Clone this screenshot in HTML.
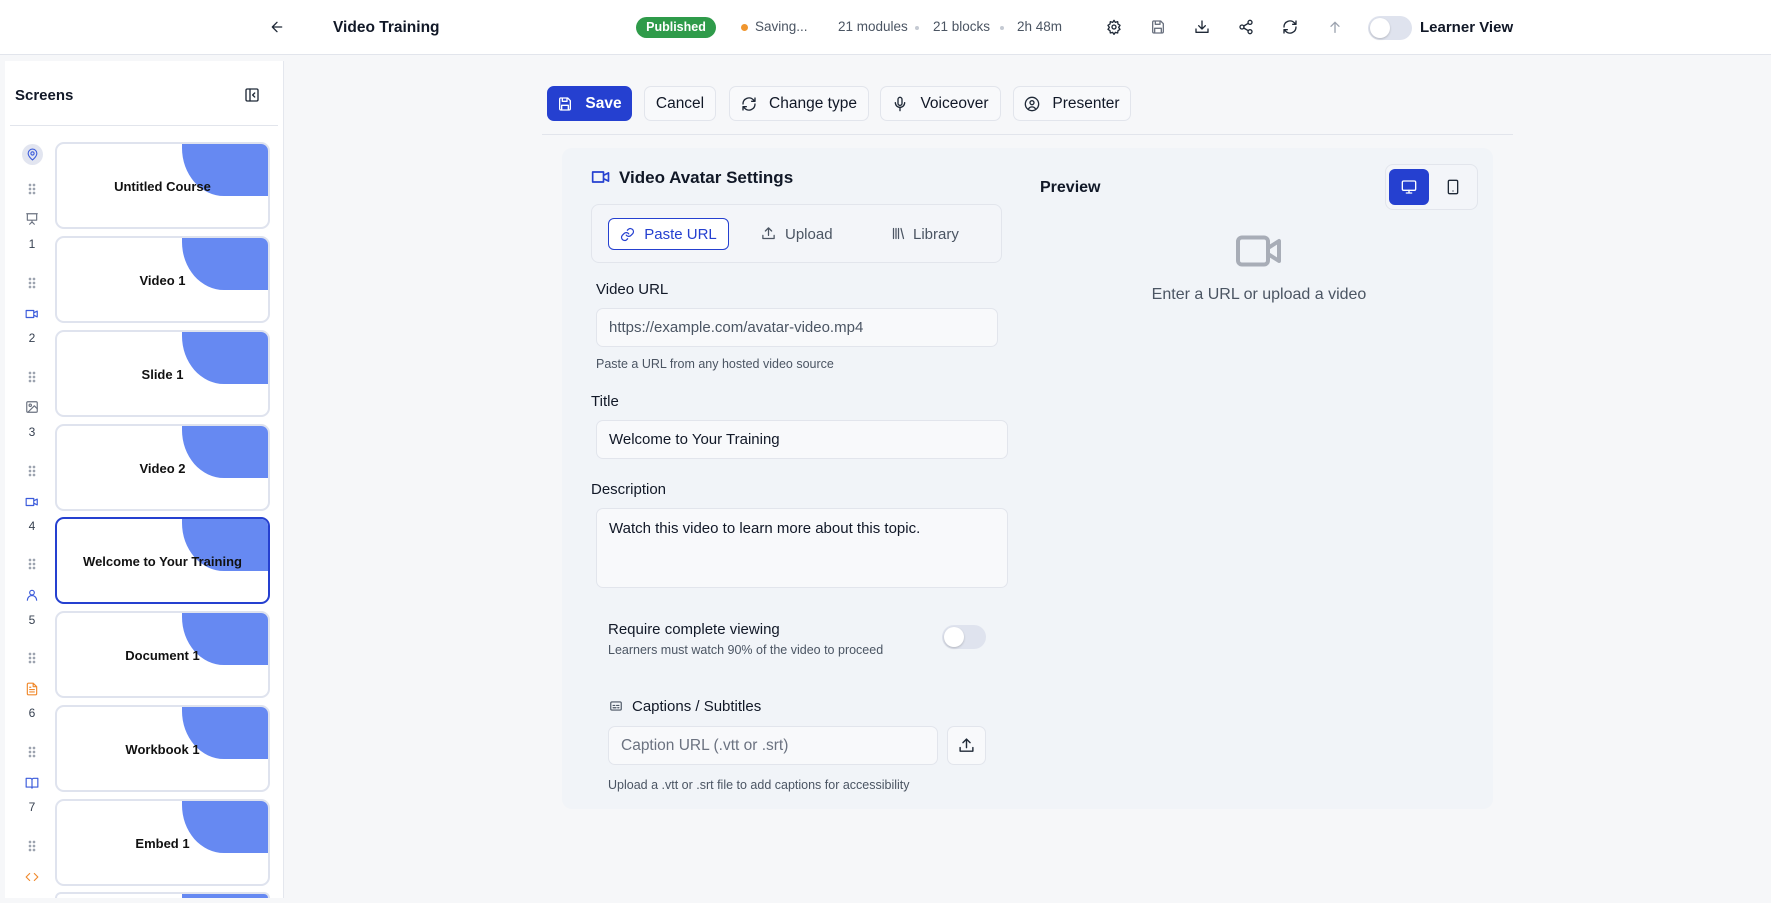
<!DOCTYPE html>
<html style="width:1771px;height:903px;overflow:hidden"><head><meta charset="utf-8"><style>
*{box-sizing:border-box;margin:0;padding:0}
body{width:1771px;height:903px;overflow:hidden;background:#f6f7f9;font-family:"Liberation Sans",Arial,sans-serif;color:#111827;position:relative}
.a{position:absolute}
svg{display:block}
.hdr{left:0;top:0;width:1771px;height:55px;background:#fff;border-bottom:1px solid #e2e5ec}
.meta{font-size:13.5px;color:#4b5563;top:19px}
.ic{stroke:#1f2937;fill:none;stroke-width:2;stroke-linecap:round;stroke-linejoin:round}
.btn{top:86px;height:35px;border:1px solid #e2e5ec;border-radius:7px;background:#f8f9fb;font-size:15.5px;font-weight:500;display:flex;align-items:center;justify-content:center;gap:12px;color:#111827}
.card{left:55px;width:215px;height:87px;background:#fff;border:2px solid #dfe3ee;border-radius:9px;overflow:hidden}
.card .blue{position:absolute;right:0;top:0;width:86px;height:52px;background:#6689f2;border-bottom-left-radius:42px 48px}
.card .t{position:absolute;left:0;right:0;top:35px;text-align:center;font-size:13px;font-weight:700;color:#111}
.num{left:22px;width:20px;text-align:center;font-size:12px;color:#374151}
.dots{left:28px;width:8px;height:12px;background-image:radial-gradient(circle,#9ca3af 1.2px,transparent 1.5px);background-size:4px 4px}
.lbl{font-size:15px;font-weight:500;color:#111827}
.inp{background:#f8f9fb;border:1px solid #e2e5ec;border-radius:7px;font-size:15px;padding-left:12px;display:flex;align-items:center}
.help{font-size:12.5px;color:#4b5563}
</style></head><body>
<div class="a hdr"></div>
<svg class="a" style="left:269px;top:19px" width="16" height="16" viewBox="0 0 24 24"><path class="ic" d="M19 12H5M12 19l-7-7 7-7"/></svg>
<div class="a" style="left:333px;top:19px;font-size:15.5px;font-weight:700">Video Training</div>
<div class="a" style="left:636px;top:17px;width:80px;height:21px;border-radius:11px;background:#2f9b4a;color:#fff;font-size:12.5px;font-weight:700;text-align:center;line-height:21px">Published</div>
<div class="a" style="left:741px;top:24px;width:7px;height:7px;border-radius:50%;background:#f0962e"></div>
<div class="a meta" style="left:755px">Saving...</div>
<div class="a meta" style="left:838px">21 modules</div>
<div class="a" style="left:915px;top:26px;width:4px;height:4px;border-radius:50%;background:#c5cad3"></div>
<div class="a meta" style="left:933px">21 blocks</div>
<div class="a" style="left:1000px;top:26px;width:4px;height:4px;border-radius:50%;background:#c5cad3"></div>
<div class="a meta" style="left:1017px">2h 48m</div>
<svg class="a" style="left:1106px;top:19px" width="16" height="16" viewBox="0 0 24 24"><circle class="ic" cx="12" cy="12" r="3"/><path class="ic" d="M12 2l2 3 3.5-1 .5 3.5 3 2-2 3 2 3-3 2-.5 3.5-3.5-1-2 3-2-3-3.5 1-.5-3.5-3-2 2-3-2-3 3-2 .5-3.5 3.5 1z"/></svg>
<svg class="a" style="left:1150px;top:19px" width="16" height="16" viewBox="0 0 24 24"><path class="ic" style="stroke:#6b7280" d="M5 3h11l4 4v12a2 2 0 0 1-2 2H6a2 2 0 0 1-2-2V5a2 2 0 0 1 1-2zM8 3v5h7V3M7 21v-7h10v7"/></svg>
<svg class="a" style="left:1194px;top:19px" width="16" height="16" viewBox="0 0 24 24"><path class="ic" d="M12 3v12M7 10l5 5 5-5M3 15v5h18v-5"/></svg>
<svg class="a" style="left:1238px;top:19px" width="16" height="16" viewBox="0 0 24 24"><circle class="ic" cx="18" cy="5" r="3"/><circle class="ic" cx="6" cy="12" r="3"/><circle class="ic" cx="18" cy="19" r="3"/><path class="ic" d="M8.6 13.5l6.8 4M15.4 6.5l-6.8 4"/></svg>
<svg class="a" style="left:1282px;top:19px" width="16" height="16" viewBox="0 0 24 24"><path class="ic" d="M21 12a9 9 0 0 1-15.5 6.3L3 16M3 12a9 9 0 0 1 15.5-6.3L21 8M21 3v5h-5M3 21v-5h5"/></svg>
<svg class="a" style="left:1327px;top:19px" width="16" height="16" viewBox="0 0 24 24"><path class="ic" style="stroke:#9ca3af" d="M12 20V5M6 11l6-6 6 6"/></svg>
<div class="a" style="left:1368px;top:16px;width:44px;height:24px;border-radius:12px;background:#dfe3ee"></div>
<div class="a" style="left:1370px;top:18px;width:20px;height:20px;border-radius:50%;background:#fff;box-shadow:0 1px 2px rgba(0,0,0,.2)"></div>
<div class="a" style="left:1420px;top:19px;font-size:15px;font-weight:700">Learner View</div>

<!-- sidebar -->
<div class="a" style="left:5px;top:61px;width:279px;height:837px;background:#fff;border-right:1px solid #e4e7ee"></div>
<div class="a" style="left:15px;top:87px;font-size:15px;font-weight:700">Screens</div>
<svg class="a" style="left:244px;top:87px" width="16" height="16" viewBox="0 0 24 24"><rect class="ic" x="3" y="3" width="18" height="18" rx="2"/><path class="ic" d="M9 3v18M16 9l-3 3 3 3"/></svg>
<div class="a" style="left:10px;top:125px;width:268px;height:1px;background:#e2e5ec"></div>

<div class="a" style="left:22px;top:144px;width:21px;height:21px;border-radius:50%;background:#e2e5f0"></div>
<svg class="a" style="left:26px;top:148px" width="13" height="13" viewBox="0 0 24 24"><path class="ic" style="stroke:#3b5bdb" d="M20 10c0 6-8 12-8 12s-8-6-8-12a8 8 0 0 1 16 0z"/><circle class="ic" style="stroke:#3b5bdb" cx="12" cy="10" r="3"/></svg>

<div class="a card" style="top:142px"><div class="blue"></div><div class="t">Untitled Course</div></div>
<div class="a card" style="top:236px"><div class="blue"></div><div class="t">Video 1</div></div>
<div class="a card" style="top:330px"><div class="blue"></div><div class="t">Slide 1</div></div>
<div class="a card" style="top:424px"><div class="blue"></div><div class="t">Video 2</div></div>
<div class="a card" style="top:517px;border-color:#2540d0"><div class="blue"></div><div class="t">Welcome to Your Training</div></div>
<div class="a card" style="top:611px"><div class="blue"></div><div class="t">Document 1</div></div>
<div class="a card" style="top:705px"><div class="blue"></div><div class="t">Workbook 1</div></div>
<div class="a card" style="top:799px"><div class="blue"></div><div class="t">Embed 1</div></div>
<div class="a card" style="top:892px;height:6px;border-bottom:none;border-radius:9px 9px 0 0"><div class="blue"></div></div>

<div class="a dots" style="top:183px"></div>
<div class="a dots" style="top:277px"></div>
<div class="a dots" style="top:371px"></div>
<div class="a dots" style="top:465px"></div>
<div class="a dots" style="top:558px"></div>
<div class="a dots" style="top:652px"></div>
<div class="a dots" style="top:746px"></div>
<div class="a dots" style="top:840px"></div>
<div class="a num" style="top:237px">1</div>
<div class="a num" style="top:331px">2</div>
<div class="a num" style="top:425px">3</div>
<div class="a num" style="top:519px">4</div>
<div class="a num" style="top:613px">5</div>
<div class="a num" style="top:706px">6</div>
<div class="a num" style="top:800px">7</div>
<svg class="a" style="left:25px;top:212px" width="14" height="14" viewBox="0 0 24 24"><path class="ic" style="stroke:#6b7280" d="M3 3h18M4 3v11h16V3M12 14v3M8 21l4-4 4 4"/></svg>
<svg class="a" style="left:25px;top:307px" width="14" height="14" viewBox="0 0 24 24"><path class="ic" style="stroke:#3b5bdb" d="M2 6h13v12H2zM15 10l6-3v10l-6-3"/></svg>
<svg class="a" style="left:25px;top:400px" width="14" height="14" viewBox="0 0 24 24"><rect class="ic" style="stroke:#6b7280" x="3" y="3" width="18" height="18" rx="2"/><circle class="ic" style="stroke:#6b7280" cx="9" cy="9" r="2"/><path class="ic" style="stroke:#6b7280" d="M21 15l-5-5L5 21"/></svg>
<svg class="a" style="left:25px;top:495px" width="14" height="14" viewBox="0 0 24 24"><path class="ic" style="stroke:#3b5bdb" d="M2 6h13v12H2zM15 10l6-3v10l-6-3"/></svg>
<svg class="a" style="left:25px;top:588px" width="14" height="14" viewBox="0 0 24 24"><circle class="ic" style="stroke:#3b5bdb" cx="12" cy="8" r="4"/><path class="ic" style="stroke:#3b5bdb" d="M4 21a8 8 0 0 1 16 0"/></svg>
<svg class="a" style="left:25px;top:682px" width="14" height="14" viewBox="0 0 24 24"><path class="ic" style="stroke:#f08a2e" d="M14 2H6a2 2 0 0 0-2 2v16a2 2 0 0 0 2 2h12a2 2 0 0 0 2-2V8zM14 2v6h6M8 13h8M8 17h8M8 9h2"/></svg>
<svg class="a" style="left:25px;top:776px" width="14" height="14" viewBox="0 0 24 24"><path class="ic" style="stroke:#3b5bdb" d="M2 4h7a3 3 0 0 1 3 3v14a2 2 0 0 0-2-2H2zM22 4h-7a3 3 0 0 0-3 3v14a2 2 0 0 1 2-2h8z"/></svg>
<svg class="a" style="left:25px;top:870px" width="14" height="14" viewBox="0 0 24 24"><path class="ic" style="stroke:#f08a2e" d="M8 6l-6 6 6 6M16 6l6 6-6 6"/></svg>
<div class="a" style="left:0;top:898px;width:290px;height:5px;background:#f6f7f9"></div>

<!-- toolbar -->
<div class="a btn" style="left:547px;width:85px;background:#2540d0;border-color:#2540d0;color:#fff;font-weight:700">
<svg width="16" height="16" viewBox="0 0 24 24"><path class="ic" style="stroke:#fff" d="M5 3h11l4 4v12a2 2 0 0 1-2 2H6a2 2 0 0 1-2-2V5a2 2 0 0 1 1-2zM8 3v5h7V3M7 21v-7h10v7"/></svg>Save</div>
<div class="a btn" style="left:644px;width:72px">Cancel</div>
<div class="a btn" style="left:729px;width:140px"><svg width="16" height="16" viewBox="0 0 24 24"><path class="ic" d="M21 12a9 9 0 0 1-15.5 6.3L3 16M3 12a9 9 0 0 1 15.5-6.3L21 8M21 3v5h-5M3 21v-5h5"/></svg>Change type</div>
<div class="a btn" style="left:880px;width:121px"><svg width="16" height="16" viewBox="0 0 24 24"><rect class="ic" x="9" y="2" width="6" height="12" rx="3"/><path class="ic" d="M5 10a7 7 0 0 0 14 0M12 17v5"/></svg>Voiceover</div>
<div class="a btn" style="left:1013px;width:118px"><svg width="16" height="16" viewBox="0 0 24 24"><circle class="ic" cx="12" cy="12" r="10"/><circle class="ic" cx="12" cy="10" r="3"/><path class="ic" d="M7 19a6 6 0 0 1 10 0"/></svg>Presenter</div>
<div class="a" style="left:542px;top:134px;width:971px;height:1px;background:#e2e5ec"></div>

<!-- panel -->
<div class="a" style="left:562px;top:148px;width:931px;height:661px;background:#f1f4f8;border-radius:10px"></div>
<svg class="a" style="left:591px;top:167px" width="20" height="20" viewBox="0 0 24 24"><path class="ic" style="stroke:#2540d0" d="M2 6h13v12H2zM15 10l6-3v10l-6-3"/></svg>
<div class="a" style="left:619px;top:168px;font-size:17px;font-weight:700">Video Avatar Settings</div>
<div class="a" style="left:591px;top:204px;width:411px;height:59px;border:1px solid #e2e5ec;border-radius:8px;background:#f3f5f9"></div>
<div class="a" style="left:608px;top:218px;width:121px;height:32px;border:1.5px solid #2540d0;border-radius:6px;background:#fff;color:#2540d0;font-size:15px;font-weight:500;display:flex;align-items:center;justify-content:center;gap:9px">
<svg width="15" height="15" viewBox="0 0 24 24"><path class="ic" style="stroke:#2540d0" d="M10 13a5 5 0 0 0 7.5.5l3-3a5 5 0 0 0-7-7l-1.7 1.7M14 11a5 5 0 0 0-7.5-.5l-3 3a5 5 0 0 0 7 7l1.7-1.7"/></svg>Paste URL</div>
<svg class="a" style="left:761px;top:226px" width="15" height="15" viewBox="0 0 24 24"><path class="ic" style="stroke:#4b5563" d="M12 15V3M7 8l5-5 5 5M3 15v5h18v-5"/></svg>
<div class="a" style="left:785px;top:226px;font-size:15px;font-weight:500;color:#4b5563">Upload</div>
<svg class="a" style="left:891px;top:226px" width="15" height="15" viewBox="0 0 24 24"><path class="ic" style="stroke:#4b5563" d="M4 4v16M8 4v16M12 4v16M16 4l4 16"/></svg>
<div class="a" style="left:913px;top:226px;font-size:15px;font-weight:500;color:#4b5563">Library</div>

<div class="a lbl" style="left:596px;top:281px">Video URL</div>
<div class="a inp" style="left:596px;top:308px;width:402px;height:39px;color:#4b5563">https://example.com/avatar-video.mp4</div>
<div class="a help" style="left:596px;top:357px">Paste a URL from any hosted video source</div>
<div class="a lbl" style="left:591px;top:393px">Title</div>
<div class="a inp" style="left:596px;top:420px;width:412px;height:39px">Welcome to Your Training</div>
<div class="a lbl" style="left:591px;top:481px">Description</div>
<div class="a inp" style="left:596px;top:508px;width:412px;height:80px;align-items:flex-start;padding-top:11px">Watch this video to learn more about this topic.</div>
<div class="a lbl" style="left:608px;top:621px">Require complete viewing</div>
<div class="a help" style="left:608px;top:643px">Learners must watch 90% of the video to proceed</div>
<div class="a" style="left:942px;top:625px;width:44px;height:24px;border-radius:12px;background:#dfe3ee"></div>
<div class="a" style="left:944px;top:627px;width:20px;height:20px;border-radius:50%;background:#fff;box-shadow:0 1px 2px rgba(0,0,0,.2)"></div>
<svg class="a" style="left:609px;top:699px" width="14" height="14" viewBox="0 0 24 24"><rect class="ic" style="stroke:#4b5563" x="3" y="5" width="18" height="14" rx="2"/><path class="ic" style="stroke:#4b5563" d="M7 11h3M13 11h4M7 15h5M15 15h2"/></svg>
<div class="a lbl" style="left:632px;top:698px">Captions / Subtitles</div>
<div class="a inp" style="left:608px;top:726px;width:330px;height:39px;color:#6b7280;font-size:15.5px">Caption URL (.vtt or .srt)</div>
<div class="a" style="left:947px;top:726px;width:39px;height:39px;border:1px solid #e2e5ec;border-radius:7px;background:#f8f9fb"></div>
<svg class="a" style="left:958px;top:737px" width="17" height="17" viewBox="0 0 24 24"><path class="ic" d="M12 15V3M7 8l5-5 5 5M3 15v5h18v-5"/></svg>
<div class="a help" style="left:608px;top:778px">Upload a .vtt or .srt file to add captions for accessibility</div>

<div class="a" style="left:1040px;top:179px;font-size:16px;font-weight:700">Preview</div>
<div class="a" style="left:1385px;top:164px;width:93px;height:46px;border:1px solid #e2e5ec;border-radius:8px;background:#f3f5f9"></div>
<div class="a" style="left:1389px;top:169px;width:40px;height:36px;border-radius:6px;background:#2540d0"></div>
<svg class="a" style="left:1401px;top:179px" width="16" height="16" viewBox="0 0 24 24"><rect class="ic" style="stroke:#fff" x="2" y="3" width="20" height="14" rx="2"/><path class="ic" style="stroke:#fff" d="M8 21h8M12 17v4"/></svg>
<svg class="a" style="left:1445px;top:179px" width="16" height="16" viewBox="0 0 24 24"><rect class="ic" x="5" y="2" width="14" height="20" rx="2"/><path class="ic" d="M12 18h.01"/></svg>
<svg class="a" style="left:1236px;top:235px" width="46" height="32" viewBox="0 0 46 32"><rect x="2" y="2.5" width="30" height="27" rx="4" fill="none" stroke="#a8adb7" stroke-width="4"/><path d="M32 13l11-7v20l-11-7" fill="none" stroke="#a8adb7" stroke-width="4" stroke-linejoin="round"/></svg>
<div class="a" style="left:1080px;top:286px;width:358px;text-align:center;font-size:16px;color:#4b5563">Enter a URL or upload a video</div>
</body></html>
